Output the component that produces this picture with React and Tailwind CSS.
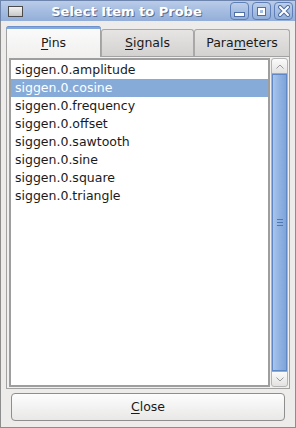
const pins = [
  'siggen.0.amplitude',
  'siggen.0.cosine',
  'siggen.0.frequency',
  'siggen.0.offset',
  'siggen.0.sawtooth',
  'siggen.0.sine',
  'siggen.0.square',
  'siggen.0.triangle',
];

function TitleButton({ children }) {
  return (
    <div className="w-[19px] h-[18px] rounded-[4px] border border-[#5f7fb6] bg-gradient-to-b from-[#bccfea] to-[#93afd9] flex items-center justify-center">
      {children}
    </div>
  );
}

function Tab({ active, children, width }) {
  if (active) {
    return (
      <div className={`${width} h-[31px] -mb-px relative z-10 rounded-t-[4px] border border-b-0 border-[#a2a2a2] bg-gradient-to-b from-[#fbfbfb] to-[#f1f0ef] flex items-center justify-center text-[12.5px] text-[#1a1a1a]`}>
        <div className="absolute -top-px -left-px -right-px h-[3px] rounded-t-[4px] bg-[#86a9dc] border-t border-[#6c91cc]" />
        <span className="pt-[2px]">{children}</span>
      </div>
    );
  }
  return (
    <div className={`${width} h-[27px] rounded-t-[3px] border border-b-0 border-[#a8a8a8] bg-gradient-to-b from-[#e6e5e4] to-[#d3d2d1] flex items-center justify-center text-[12.5px] text-[#1a1a1a]`}>
      {children}
    </div>
  );
}

export default function App() {
  return (
    <div className="w-[296px] h-[428px] flex flex-col bg-[#edeceb] font-['DejaVu_Sans',sans-serif] select-none">
      {/* Title bar */}
      <div className="h-[22px] flex items-center border-x border-t border-[#6d84ad] bg-gradient-to-b from-[#b9cce9] to-[#92aed8]">
        <div className="ml-[7px] w-[15px] h-[11px] border border-[#4b4b4b] bg-gradient-to-b from-[#f2f2f2] to-[#c8c8c8]" />
        <div className="flex-1 text-center text-white font-bold text-[13px] leading-none pt-px [text-shadow:1px_1px_0_#5a6e92]">
          Select Item to Probe
        </div>
        <div className="flex gap-[3px] mr-[2px]">
          <TitleButton>
            <div className="w-[9px] h-[3px] mt-[7px] bg-white border border-[#4f6fa6] box-content" />
          </TitleButton>
          <TitleButton>
            <div className="w-[7px] h-[7px] border-[2px] border-white outline outline-1 outline-[#4f6fa6]" />
          </TitleButton>
          <TitleButton>
            <svg width="12" height="12" viewBox="0 0 12 12">
              <path d="M2 2 L10 10 M10 2 L2 10" stroke="#4f6fa6" strokeWidth="4" strokeLinecap="round" />
              <path d="M2 2 L10 10 M10 2 L2 10" stroke="#ffffff" strokeWidth="2" strokeLinecap="round" />
            </svg>
          </TitleButton>
        </div>
      </div>

      {/* Body */}
      <div className="flex-1 flex flex-col border-x border-b border-[#8d8d8d] px-[5px] pt-[4px] pb-[6px]">
        <div className="flex items-end h-[31px]">
          <Tab active width="w-[95px]">
            <span><span className="underline underline-offset-2">P</span>ins</span>
          </Tab>
          <Tab width="w-[93px]">
            <span><span className="underline underline-offset-2">S</span>ignals</span>
          </Tab>
          <Tab width="w-[96px]">
            <span>Para<span className="underline underline-offset-2">m</span>eters</span>
          </Tab>
        </div>

        {/* Notebook page */}
        <div className="h-[333px] border border-[#a2a2a2] bg-[#f1f0ef] flex gap-[1px] pl-[2px] pr-[1px] py-[1px]">
          <div className="flex-1 border-2 border-[#9e9e9e] bg-white pt-px">
            {pins.map((p, i) => (
              <div
                key={p}
                className={`h-[18px] flex items-center pl-[4px] text-[12.5px] leading-none ${
                  i === 1 ? 'bg-[#86abd9] text-white' : 'text-[#1a1a1a]'
                }`}
              >
                {p}
              </div>
            ))}
          </div>

          {/* Scrollbar */}
          <div className="w-[17px] flex flex-col rounded-[3px] border border-[#b4b4b4] bg-[#dcdbda]">
            <div className="h-[15px] rounded-t-[3px] bg-gradient-to-b from-[#fbfbfb] to-[#e3e2e1] border-b border-[#a9a9a9] flex items-center justify-center">
              <svg width="8" height="5" viewBox="0 0 8 5">
                <path d="M0.5 4.5 L4 1 L7.5 4.5" fill="none" stroke="#9a9a9a" strokeWidth="1" />
              </svg>
            </div>
            <div className="flex-1 border border-[#5f88c4] bg-gradient-to-r from-[#a9c5ea] via-[#8fb2e2] to-[#7ea4da] flex items-center justify-center">
              <div className="flex flex-col gap-[2px]">
                <div className="w-[6px] h-px bg-[#4f77b3]" />
                <div className="w-[6px] h-px bg-[#4f77b3]" />
                <div className="w-[6px] h-px bg-[#4f77b3]" />
              </div>
            </div>
            <div className="h-[15px] rounded-b-[3px] bg-gradient-to-b from-[#fbfbfb] to-[#e3e2e1] border-t border-[#a9a9a9] flex items-center justify-center">
              <svg width="8" height="5" viewBox="0 0 8 5">
                <path d="M0.5 0.5 L4 4 L7.5 0.5" fill="none" stroke="#9a9a9a" strokeWidth="1" />
              </svg>
            </div>
          </div>
        </div>

        {/* Close button */}
        <div className="mt-[4px] mx-[5px] h-[28px] rounded-[4px] border border-[#8e8e8e] bg-gradient-to-b from-[#fdfdfd] to-[#e9e8e7] flex items-center justify-center text-[12.5px] text-[#1a1a1a]">
          <span><span className="underline underline-offset-2">C</span>lose</span>
        </div>
      </div>
    </div>
  );
}
